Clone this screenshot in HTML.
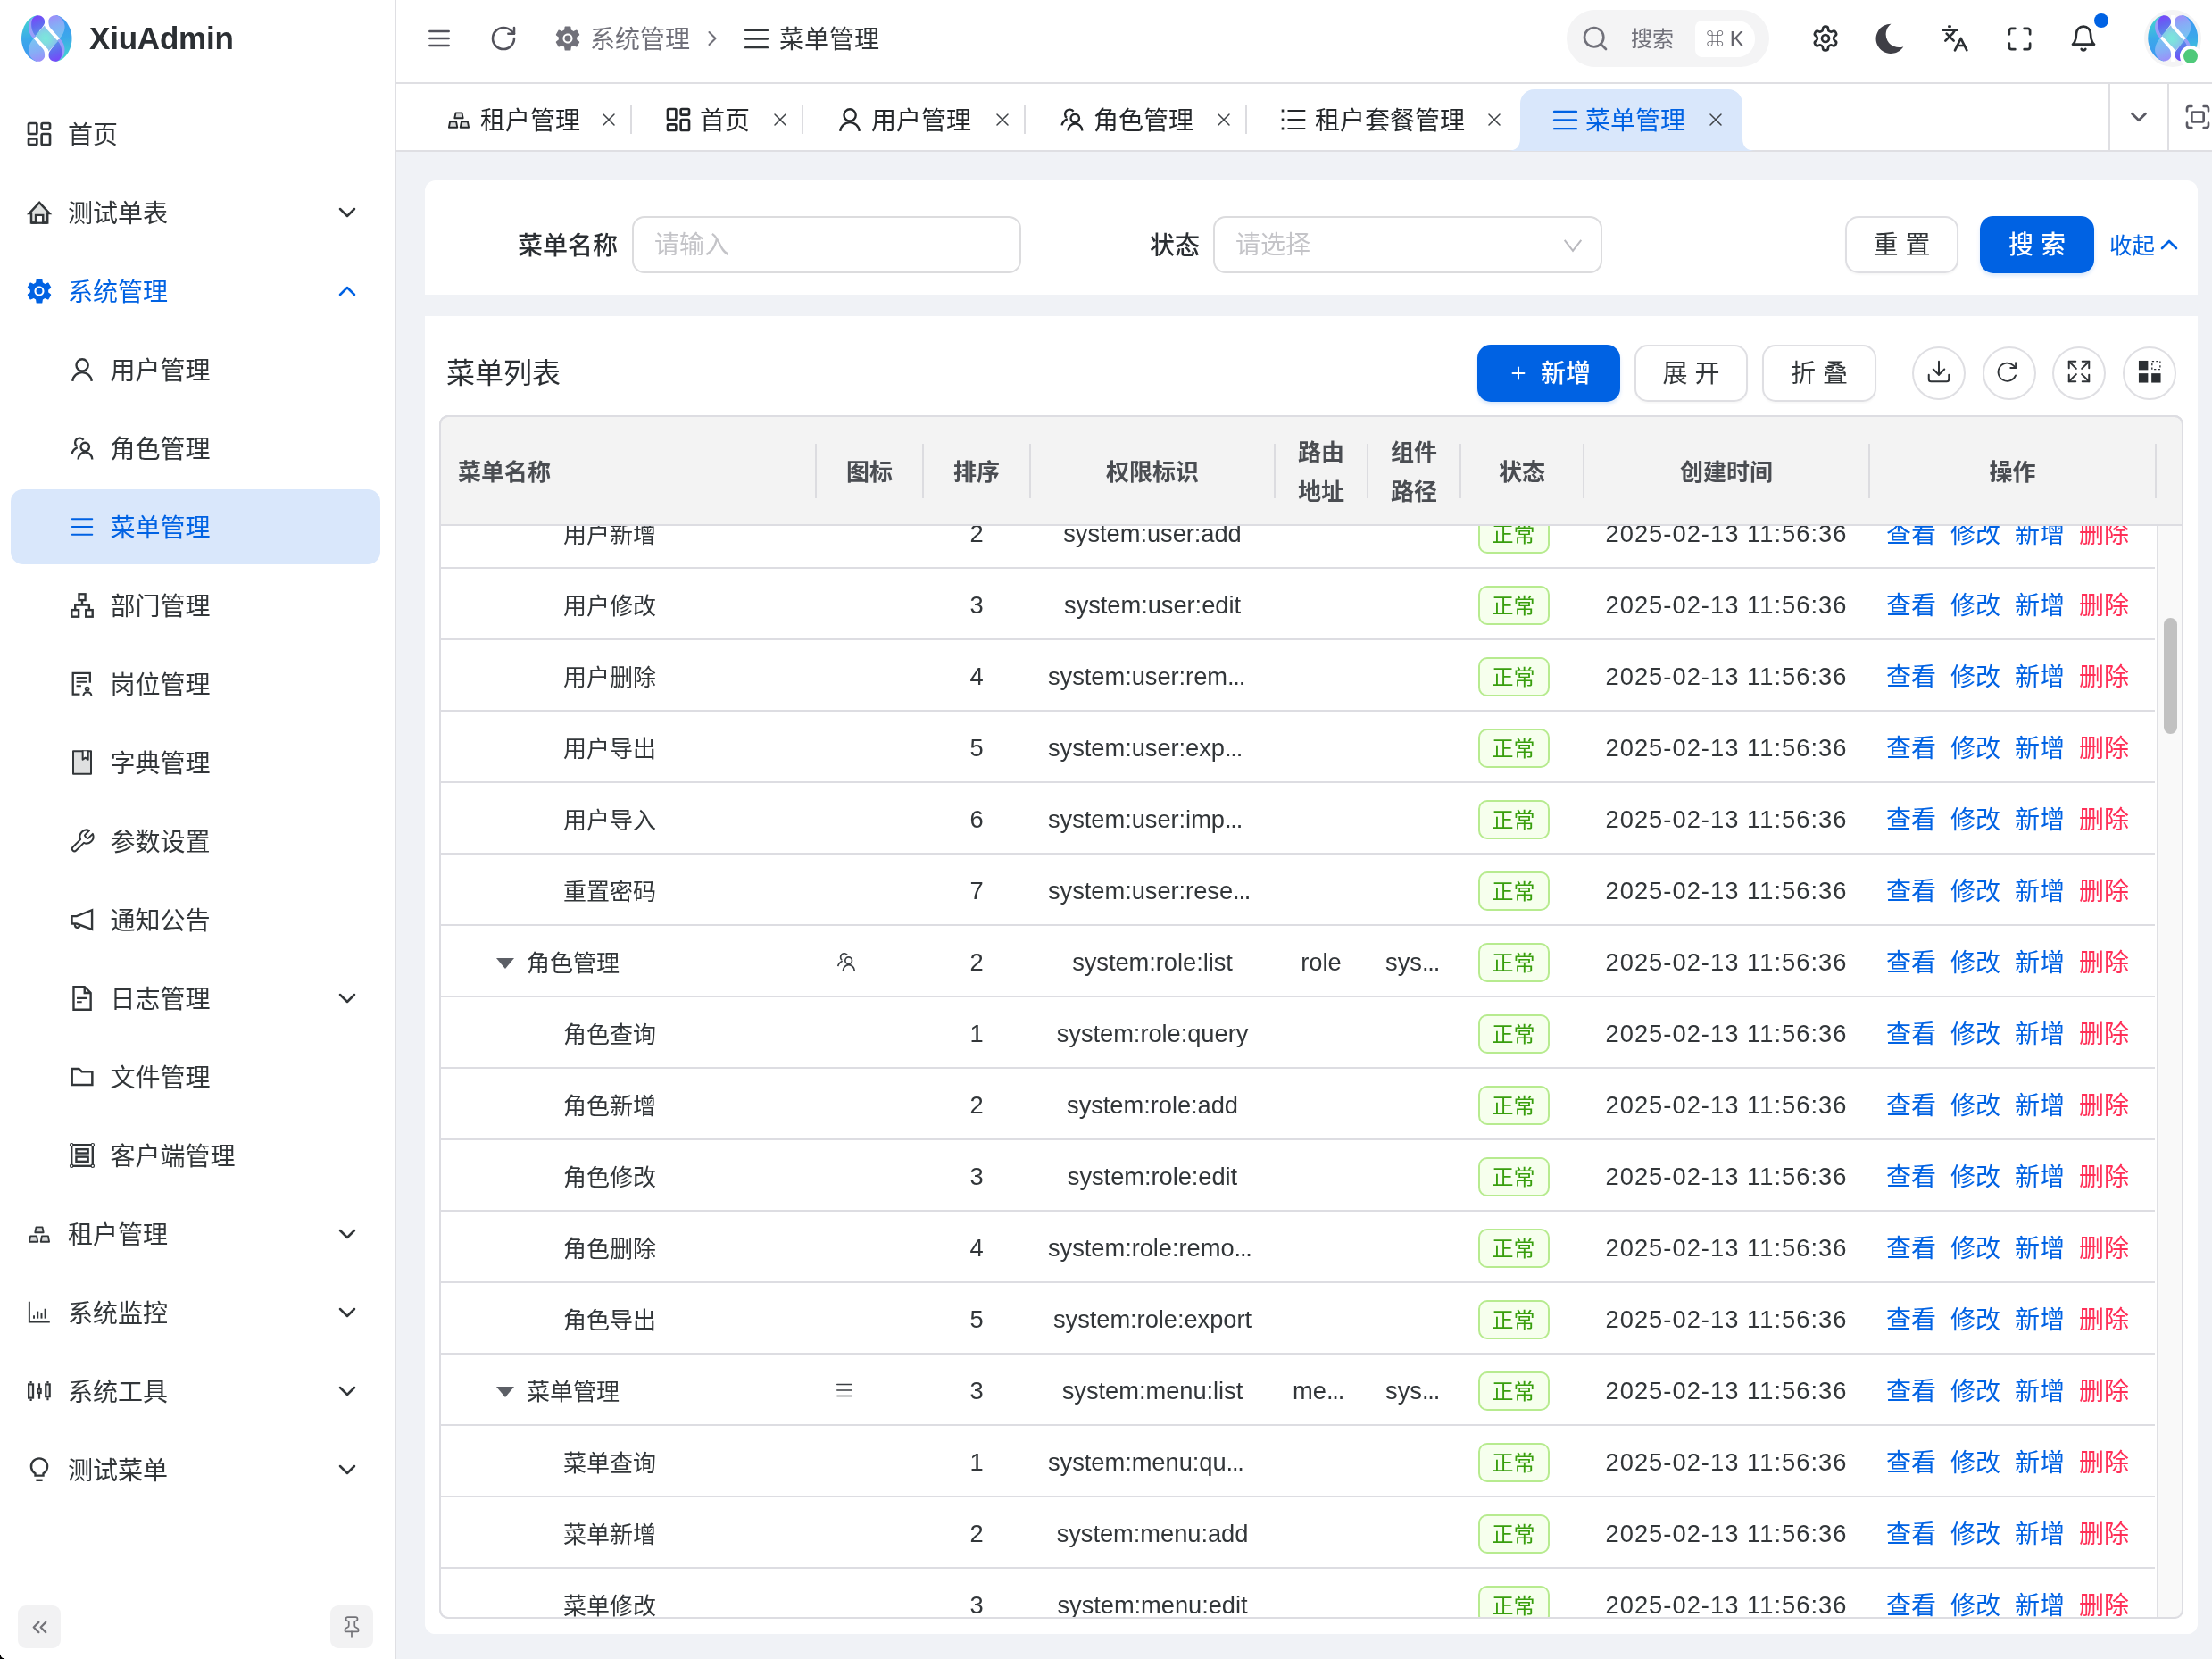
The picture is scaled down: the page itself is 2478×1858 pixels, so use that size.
<!DOCTYPE html>
<html lang="zh-CN"><head><meta charset="utf-8"><title>XiuAdmin - 菜单管理</title>
<style>
*{box-sizing:border-box}
html,body{margin:0;padding:0}
body{width:2478px;height:1858px;position:relative;overflow:hidden;background:#f0f2f6;
font-family:"Liberation Sans","Noto Sans CJK SC",sans-serif;color:#323639;font-size:28px;line-height:1}
#app{position:absolute;left:0;top:0;width:2478px;height:1858px;overflow:hidden;will-change:transform}
svg{overflow:visible}
a{text-decoration:none}
/* sidebar */
#side{position:absolute;left:0;top:0;width:444px;height:1858px;background:#fff;border-right:2px solid #dfdfe3}
#logo{position:absolute;left:24px;top:17px}
#brand{position:absolute;left:100px;top:20px;font-size:35px;line-height:46px;font-weight:700;color:#2b2f33;letter-spacing:-.2px}
.mi{position:absolute;left:12px;width:414px;height:84px;border-radius:14px}
.mi.act{background:#d9e7fb;color:#0062e3}
.mi.open{color:#0062e3}
.mic{position:absolute}
.mtx{position:absolute;top:2px;line-height:84px;font-size:28px;white-space:nowrap}
.mch{position:absolute;left:361px;top:26px}
.sbtn{position:absolute;top:1798px;width:48px;height:48px;border-radius:9px;background:#f2f2f3;color:#737378;display:flex;align-items:center;justify-content:center}
/* header */
#head{position:absolute;left:444px;top:0;width:2034px;height:94px;background:#fff;border-bottom:2px solid #dfdfe3}
.hi{position:absolute;color:#45494d}
.bc{position:absolute;top:2px;line-height:86px;font-size:28px;white-space:nowrap}
#srch{position:absolute;left:1755px;top:11px;width:227px;height:64px;border-radius:32px;background:#f4f4f5;color:#71717a}
#kbd{position:absolute;left:144px;top:12px;width:67px;height:41px;background:#fff;border-radius:8px 20px 20px 8px;font-size:24px;line-height:42px;text-align:center;color:#63636b}
/* tabs */
#tabs{position:absolute;left:444px;top:94px;width:2034px;height:76px;background:#fff;border-bottom:2px solid #dfdfe3}
.tab{position:absolute;top:94px;height:74px;color:#25282b}
.tic{position:absolute}
.ttx{position:absolute;left:77px;top:2px;line-height:80px;font-size:28px;white-space:nowrap}
.tx{position:absolute;right:13px;top:28px;color:#3f4347}
.tsep{position:absolute;right:-1px;top:24px;width:2px;height:32px;background:#dcdce0}
/* cards */
.card{position:absolute;left:476px;width:1986px;background:#fff}
.lbl{position:absolute;font-size:28px;font-weight:500;line-height:63px;top:244px;white-space:nowrap;color:#2b2f33}
.inp{position:absolute;top:242px;height:64px;border:2px solid #dcdcde;border-radius:14px;background:#fff;font-size:28px;line-height:62px;color:#c4c4c8;padding-left:23px}
.btn{position:absolute;height:64px;border-radius:15px;font-size:28px;line-height:62px;text-align:center;border:2px solid #dfdfe3;background:#fff;color:#323639;box-shadow:0 2px 2px rgba(0,0,0,.03);white-space:nowrap}
.btn.pri{background:#0062e3;border-color:#0062e3;color:#fff;box-shadow:0 3px 4px rgba(0,98,227,.15)}
.cbtn{position:absolute;top:388px;width:60px;height:60px;border-radius:30px;border:2px solid #dfdfe3;background:#fff;color:#2f3337;display:flex;align-items:center;justify-content:center;padding-bottom:4px}
/* table */
#tbl{position:absolute;left:492px;top:465px;width:1954px;height:1348px;border:2px solid #dddde2;border-radius:10px;overflow:hidden;background:#fff}
#thead{position:absolute;left:0;top:0;width:1955px;height:122px;background:#f3f3f4;border-bottom:2px solid #e3e3e6}
.th{position:absolute;top:0;height:120px;display:flex;align-items:center;justify-content:center;text-align:center;font-weight:700;font-size:26px;line-height:44px;color:#4a4d52;padding-top:3px}
.th i{position:absolute;right:-1px;top:30px;width:2px;height:61px;background:#dcdce0}
.tr{position:absolute;left:492px;width:1922px;height:80px;border-bottom:2px solid #dddde2;font-size:26px}
.td{position:absolute;top:0;height:78px;line-height:84px;white-space:nowrap;text-align:center;overflow:hidden}
.c-name{left:2px;width:420px;text-align:left}
.c-icon{left:422px;width:120px}
.c-sort{left:542px;width:120px;font-size:27.300px;line-height:82px}
.c-perm{left:662px;width:274px;font-size:27.300px;line-height:82px;letter-spacing:-.05px}
.c-route{left:936px;width:104px;font-size:27.300px;line-height:82px}
.c-comp{left:1040px;width:104px;font-size:27.300px;line-height:82px}
.c-stat{left:1144px;width:138px}
.c-time{left:1282px;width:320px;font-size:27.300px;line-height:82px;letter-spacing:1.03px}
.c-op{left:1602px;width:321px;text-align:left;font-size:28px}
.c-op a{position:relative;top:0px;display:inline-block;margin-right:16px;color:#0062e3}
.c-op a:first-child{margin-left:19px}
.c-op a.del{color:#ff3058;margin-right:0}
.nm{position:absolute;top:0}
.ell{text-align:left;padding-left:20px}
.dots{letter-spacing:-1.2px}
.tri{position:absolute;left:62px;top:36px;width:0;height:0;border-left:10px solid transparent;border-right:10px solid transparent;border-top:12px solid #5c5f66}
.ricon{position:absolute;left:21px;color:#3a3e42}
.tag{display:inline-block;vertical-align:top;margin-top:19px;margin-right:19px;width:80px;height:44px;line-height:41px;border:2px solid #b7eb8f;background:#f6ffed;color:#389e0d;font-size:24px;border-radius:10px;text-align:center}
</style></head><body>
<div id="app">
<!-- content cards -->
<div class="card" style="top:202px;height:128px;border-radius:12px 12px 0 0"></div>
<div class="card" style="top:354px;height:1476px;border-radius:0 0 12px 12px"></div>

<!-- search form -->
<span class="lbl" style="left:580px">菜单名称</span>
<div class="inp" style="left:708px;width:436px">请输入</div>
<span class="lbl" style="left:1288px">状态</span>
<div class="inp" style="left:1359px;width:436px">请选择<span style="position:absolute;left:385px;top:15px;color:#b9b9be"><svg width="32" height="32" viewBox="-16 -16 32 32" fill="none" stroke="currentColor" stroke-width="2" stroke-linecap="round" stroke-linejoin="round" style="display:block;"><path stroke-linecap="butt" stroke-linejoin="miter" d="M-9.300 -6.200L0 5.800L9.300 -6.200"/></svg></span></div>
<div class="btn" style="left:2067px;top:242px;width:127px">重 置</div>
<div class="btn pri" style="left:2218px;top:242px;width:128px;font-weight:500">搜 索</div>
<span style="position:absolute;left:2363px;top:244px;line-height:63px;font-size:25.500px;color:#0062e3;white-space:nowrap">收起</span>
<span style="position:absolute;left:2414px;top:258px;color:#0062e3"><svg width="32" height="32" viewBox="0 0 24 24" fill="none" stroke="currentColor" stroke-width="2" stroke-linecap="round" stroke-linejoin="round" style="display:block;"><path d="m18 15-6-6-6 6"/></svg></span>

<!-- toolbar -->
<span style="position:absolute;left:500px;top:386px;line-height:64px;font-size:32px;color:#2b2f33;white-space:nowrap">菜单列表</span>
<div class="btn pri" style="left:1655px;top:386px;width:160px;font-weight:500"><span style="position:absolute;left:33px;top:19px"><svg width="22" height="22" viewBox="0 0 24 24" fill="none" stroke="currentColor" stroke-width="2.2" stroke-linecap="round" stroke-linejoin="round" style="display:block;"><path d="M5 12h14"/><path d="M12 5v14"/></svg></span><span style="margin-left:38px">新增</span></div>
<div class="btn" style="left:1831px;top:386px;width:127px">展 开</div>
<div class="btn" style="left:1974px;top:386px;width:128px">折 叠</div>
<div class="cbtn" style="left:2142px"><svg width="30" height="30" viewBox="0 0 24 24" fill="none" stroke="currentColor" stroke-width="1.6" stroke-linecap="round" stroke-linejoin="round" style="display:block;"><path d="M21 15v4a2 2 0 0 1-2 2H5a2 2 0 0 1-2-2v-4"/><path d="m7 10 5 5 5-5"/><path d="M12 15V3"/></svg></div>
<div class="cbtn" style="left:2221px;padding-right:5px"><svg width="27" height="27" viewBox="0 0 24 24" fill="none" stroke="currentColor" stroke-width="1.6" stroke-linecap="round" stroke-linejoin="round" style="display:block;"><path d="M20.500 15.500a9 9 0 1 1-2.200-9.900L20.500 8"/><path d="M20.500 2.800V8h-5.200"/></svg></div>
<div class="cbtn" style="left:2299px"><svg width="30" height="30" viewBox="0 0 24 24" fill="none" stroke="currentColor" stroke-width="1.6" stroke-linecap="round" stroke-linejoin="round" style="display:block;"><path d="m15 3h6v6"/><path d="M21 3l-6.500 6.500"/><path d="M9 21H3v-6"/><path d="m3 21 6.500-6.500"/><path d="M3 9V3h6"/><path d="m3 3 6.500 6.500"/><path d="M21 15v6h-6"/><path d="m21 21-6.500-6.500"/></svg></div>
<div class="cbtn" style="left:2378px"><svg width="26.500" height="26.500" viewBox="0 0 28 28" style="display:block"><rect x="1" y="1" width="11" height="11" fill="#2b2f33"/><rect x="1" y="16" width="11" height="11" fill="#2b2f33"/><rect x="16" y="16" width="11" height="11" fill="#2b2f33"/><rect x="16.700" y="1.700" width="9.600" height="9.600" fill="none" stroke="#2b2f33" stroke-width="1.400" stroke-dasharray="2.400 2.400"/></svg></div>

<!-- table -->
<div id="tbl"></div>
<div class="tr" style="top:557px"><div class="td c-name"><span class="nm" style="left:137px">用户新增</span></div><div class="td c-icon"></div><div class="td c-sort">2</div><div class="td c-perm ">system:user:add</div><div class="td c-route "></div><div class="td c-comp ell"></div><div class="td c-stat"><span class="tag">正常</span></div><div class="td c-time">2025-02-13 11:56:36</div><div class="td c-op"><a>查看</a><a>修改</a><a>新增</a><a class="del">删除</a></div></div><div class="tr" style="top:637px"><div class="td c-name"><span class="nm" style="left:137px">用户修改</span></div><div class="td c-icon"></div><div class="td c-sort">3</div><div class="td c-perm ">system:user:edit</div><div class="td c-route "></div><div class="td c-comp ell"></div><div class="td c-stat"><span class="tag">正常</span></div><div class="td c-time">2025-02-13 11:56:36</div><div class="td c-op"><a>查看</a><a>修改</a><a>新增</a><a class="del">删除</a></div></div><div class="tr" style="top:717px"><div class="td c-name"><span class="nm" style="left:137px">用户删除</span></div><div class="td c-icon"></div><div class="td c-sort">4</div><div class="td c-perm ell">system:user:rem<span class="dots">...</span></div><div class="td c-route "></div><div class="td c-comp ell"></div><div class="td c-stat"><span class="tag">正常</span></div><div class="td c-time">2025-02-13 11:56:36</div><div class="td c-op"><a>查看</a><a>修改</a><a>新增</a><a class="del">删除</a></div></div><div class="tr" style="top:797px"><div class="td c-name"><span class="nm" style="left:137px">用户导出</span></div><div class="td c-icon"></div><div class="td c-sort">5</div><div class="td c-perm ell">system:user:exp<span class="dots">...</span></div><div class="td c-route "></div><div class="td c-comp ell"></div><div class="td c-stat"><span class="tag">正常</span></div><div class="td c-time">2025-02-13 11:56:36</div><div class="td c-op"><a>查看</a><a>修改</a><a>新增</a><a class="del">删除</a></div></div><div class="tr" style="top:877px"><div class="td c-name"><span class="nm" style="left:137px">用户导入</span></div><div class="td c-icon"></div><div class="td c-sort">6</div><div class="td c-perm ell">system:user:imp<span class="dots">...</span></div><div class="td c-route "></div><div class="td c-comp ell"></div><div class="td c-stat"><span class="tag">正常</span></div><div class="td c-time">2025-02-13 11:56:36</div><div class="td c-op"><a>查看</a><a>修改</a><a>新增</a><a class="del">删除</a></div></div><div class="tr" style="top:957px"><div class="td c-name"><span class="nm" style="left:137px">重置密码</span></div><div class="td c-icon"></div><div class="td c-sort">7</div><div class="td c-perm ell">system:user:rese<span class="dots">...</span></div><div class="td c-route "></div><div class="td c-comp ell"></div><div class="td c-stat"><span class="tag">正常</span></div><div class="td c-time">2025-02-13 11:56:36</div><div class="td c-op"><a>查看</a><a>修改</a><a>新增</a><a class="del">删除</a></div></div><div class="tr" style="top:1037px"><div class="td c-name"><span class="tri"></span><span class="nm" style="left:96px">角色管理</span></div><div class="td c-icon"><span class="ricon" style="top:27px"><svg width="26" height="26" viewBox="-16 -16 32 32" fill="none" stroke="currentColor" stroke-width="2.1" stroke-linecap="round" stroke-linejoin="round" style="display:block;"><g stroke-linecap="butt"><circle cx="3.250" cy="-1.500" r="4.700"/><path d="M-4.400 12.400A7.850 7.850 0 0 1 11.300 12.400"/><path d="M1.540 -9.220A5.200 5.200 0 1 0 -6.070 -2.240"/><path d="M-5.200 -0.900C-8.500 0.500 -10.800 3.200 -11.400 6.400"/></g></svg></span></div><div class="td c-sort">2</div><div class="td c-perm ">system:role:list</div><div class="td c-route ">role</div><div class="td c-comp ell">sys<span class="dots">...</span></div><div class="td c-stat"><span class="tag">正常</span></div><div class="td c-time">2025-02-13 11:56:36</div><div class="td c-op"><a>查看</a><a>修改</a><a>新增</a><a class="del">删除</a></div></div><div class="tr" style="top:1117px"><div class="td c-name"><span class="nm" style="left:137px">角色查询</span></div><div class="td c-icon"></div><div class="td c-sort">1</div><div class="td c-perm ">system:role:query</div><div class="td c-route "></div><div class="td c-comp ell"></div><div class="td c-stat"><span class="tag">正常</span></div><div class="td c-time">2025-02-13 11:56:36</div><div class="td c-op"><a>查看</a><a>修改</a><a>新增</a><a class="del">删除</a></div></div><div class="tr" style="top:1197px"><div class="td c-name"><span class="nm" style="left:137px">角色新增</span></div><div class="td c-icon"></div><div class="td c-sort">2</div><div class="td c-perm ">system:role:add</div><div class="td c-route "></div><div class="td c-comp ell"></div><div class="td c-stat"><span class="tag">正常</span></div><div class="td c-time">2025-02-13 11:56:36</div><div class="td c-op"><a>查看</a><a>修改</a><a>新增</a><a class="del">删除</a></div></div><div class="tr" style="top:1277px"><div class="td c-name"><span class="nm" style="left:137px">角色修改</span></div><div class="td c-icon"></div><div class="td c-sort">3</div><div class="td c-perm ">system:role:edit</div><div class="td c-route "></div><div class="td c-comp ell"></div><div class="td c-stat"><span class="tag">正常</span></div><div class="td c-time">2025-02-13 11:56:36</div><div class="td c-op"><a>查看</a><a>修改</a><a>新增</a><a class="del">删除</a></div></div><div class="tr" style="top:1357px"><div class="td c-name"><span class="nm" style="left:137px">角色删除</span></div><div class="td c-icon"></div><div class="td c-sort">4</div><div class="td c-perm ell">system:role:remo<span class="dots">...</span></div><div class="td c-route "></div><div class="td c-comp ell"></div><div class="td c-stat"><span class="tag">正常</span></div><div class="td c-time">2025-02-13 11:56:36</div><div class="td c-op"><a>查看</a><a>修改</a><a>新增</a><a class="del">删除</a></div></div><div class="tr" style="top:1437px"><div class="td c-name"><span class="nm" style="left:137px">角色导出</span></div><div class="td c-icon"></div><div class="td c-sort">5</div><div class="td c-perm ">system:role:export</div><div class="td c-route "></div><div class="td c-comp ell"></div><div class="td c-stat"><span class="tag">正常</span></div><div class="td c-time">2025-02-13 11:56:36</div><div class="td c-op"><a>查看</a><a>修改</a><a>新增</a><a class="del">删除</a></div></div><div class="tr" style="top:1517px"><div class="td c-name"><span class="tri"></span><span class="nm" style="left:96px">菜单管理</span></div><div class="td c-icon"><span class="ricon" style="top:29px"><svg width="22" height="22" viewBox="0 0 24 24" fill="none" stroke="currentColor" stroke-width="1.7" stroke-linecap="round" stroke-linejoin="round" style="display:block;"><line x1="3" x2="21" y1="5" y2="5"/><line x1="3" x2="21" y1="12" y2="12"/><line x1="3" x2="21" y1="19" y2="19"/></svg></span></div><div class="td c-sort">3</div><div class="td c-perm ">system:menu:list</div><div class="td c-route ell">me<span class="dots">...</span></div><div class="td c-comp ell">sys<span class="dots">...</span></div><div class="td c-stat"><span class="tag">正常</span></div><div class="td c-time">2025-02-13 11:56:36</div><div class="td c-op"><a>查看</a><a>修改</a><a>新增</a><a class="del">删除</a></div></div><div class="tr" style="top:1597px"><div class="td c-name"><span class="nm" style="left:137px">菜单查询</span></div><div class="td c-icon"></div><div class="td c-sort">1</div><div class="td c-perm ell">system:menu:qu<span class="dots">...</span></div><div class="td c-route "></div><div class="td c-comp ell"></div><div class="td c-stat"><span class="tag">正常</span></div><div class="td c-time">2025-02-13 11:56:36</div><div class="td c-op"><a>查看</a><a>修改</a><a>新增</a><a class="del">删除</a></div></div><div class="tr" style="top:1677px"><div class="td c-name"><span class="nm" style="left:137px">菜单新增</span></div><div class="td c-icon"></div><div class="td c-sort">2</div><div class="td c-perm ">system:menu:add</div><div class="td c-route "></div><div class="td c-comp ell"></div><div class="td c-stat"><span class="tag">正常</span></div><div class="td c-time">2025-02-13 11:56:36</div><div class="td c-op"><a>查看</a><a>修改</a><a>新增</a><a class="del">删除</a></div></div><div class="tr" style="top:1757px"><div class="td c-name"><span class="nm" style="left:137px">菜单修改</span></div><div class="td c-icon"></div><div class="td c-sort">3</div><div class="td c-perm ">system:menu:edit</div><div class="td c-route "></div><div class="td c-comp ell"></div><div class="td c-stat"><span class="tag">正常</span></div><div class="td c-time">2025-02-13 11:56:36</div><div class="td c-op"><a>查看</a><a>修改</a><a>新增</a><a class="del">删除</a></div></div>
<div style="position:absolute;left:492px;top:465px;width:1954px;height:124px;background:#f3f3f3;border:2px solid #dddde2;border-radius:10px 10px 0 0">
<div class="th" style="left:0;width:420px;justify-content:flex-start;padding-left:19px">菜单名称<i></i></div>
<div class="th" style="left:420px;width:120px">图标<i></i></div>
<div class="th" style="left:540px;width:120px">排序<i></i></div>
<div class="th" style="left:660px;width:274px">权限标识<i></i></div>
<div class="th" style="left:934px;width:104px">路由<br>地址<i></i></div>
<div class="th" style="left:1038px;width:104px">组件<br>路径<i></i></div>
<div class="th" style="left:1142px;width:138px">状态<i></i></div>
<div class="th" style="left:1280px;width:320px">创建时间<i></i></div>
<div class="th" style="left:1600px;width:321px">操作<i></i></div>
</div>
<!-- table frame & scrollbar -->
<div style="position:absolute;left:2416px;top:589px;width:28px;height:1222px;background:#f9f9f9;border-left:2px solid #e0e0e4"></div>
<div style="position:absolute;left:2424px;top:692px;width:15px;height:130px;border-radius:8px;background:#c1c1c1"></div>
<div style="position:absolute;left:492px;top:465px;width:1954px;height:1348px;border:2px solid #dddde2;border-radius:10px;pointer-events:none"></div>
<div style="position:absolute;left:476px;top:1813px;width:1986px;height:17px;background:#fff;border-radius:0 0 12px 12px"></div>
<div style="position:absolute;left:476px;top:1830px;width:1986px;height:28px;background:#f0f2f6"></div>

<!-- sidebar -->
<div id="side">
<div id="logo"><svg viewBox="200 175 1420 1305" width="56.5" height="52" style="display:block;overflow:hidden">
<defs>
<linearGradient id="la1" gradientUnits="userSpaceOnUse" x1="300" y1="300" x2="380" y2="1400"><stop offset="0" stop-color="#42d2d2"/><stop offset=".5" stop-color="#3ba8ea"/><stop offset="1" stop-color="#3c98f2"/></linearGradient>
<linearGradient id="lb1" gradientUnits="userSpaceOnUse" x1="560" y1="830" x2="760" y2="1460"><stop offset="0" stop-color="#78c4f2"/><stop offset=".55" stop-color="#86aef6"/><stop offset="1" stop-color="#9c8ff9"/></linearGradient>
<linearGradient id="lc1" gradientUnits="userSpaceOnUse" x1="560" y1="200" x2="760" y2="720"><stop offset="0" stop-color="#7a45fa"/><stop offset=".45" stop-color="#6366f1"/><stop offset="1" stop-color="#5a90e8"/></linearGradient>
<radialGradient id="ld1" gradientUnits="userSpaceOnUse" cx="880" cy="830" r="330"><stop offset="0" stop-color="#7ae8dc"/><stop offset=".45" stop-color="#80dcdf"/><stop offset="1" stop-color="#8bc0ee"/></radialGradient>
<path id="lh1" d="M660 180C400 200 200 500 200 830C200 1150 420 1450 650 1480L700 1300 700 400z" fill="url(#la1)"/>
<g id="lk1">
<path d="M545 825L845 1125C905 1190 880 1320 850 1360C800 1485 650 1505 560 1445C450 1380 390 1250 400 1130C410 1000 480 900 545 825z" fill="url(#lb1)"/>
<path d="M530 235C370 340 340 640 545 830L600 750C480 620 450 400 530 235z" fill="#9a9ef9"/>
<path d="M592 748C500 640 465 480 488 350C510 230 600 180 670 180C800 185 872 290 856 390C845 470 700 620 592 748z" fill="url(#lc1)"/>
</g>
</defs>
<use href="#lh1"/><use href="#lh1" transform="rotate(180 910 828)"/>
<path d="M585 750L858 455L1235 906L962 1201z" fill="url(#ld1)"/>
<use href="#lk1"/><use href="#lk1" transform="rotate(180 910 828)"/>
<path id="lw1" d="M536 824L612 770L948 1138C976 1196 963 1260 963 1330L963 1520L857 1520L857 1330C857 1250 850 1172 800 1117z" fill="#fff"/>
<use href="#lw1" transform="rotate(180 910 828)"/>
</svg></div>
<div id="brand">XiuAdmin</div>
<div class="mi" style="top:108px"><span class="mic" style="left:15.8px;top:26.0px"><svg width="32" height="32" viewBox="0 0 24 24" fill="none" stroke="currentColor" stroke-width="2" stroke-linecap="round" stroke-linejoin="round" style="display:block;"><rect width="7" height="9" x="3" y="3" rx="1"/><rect width="7" height="5" x="14" y="3" rx="1"/><rect width="7" height="9" x="14" y="12" rx="1"/><rect width="7" height="5" x="3" y="16" rx="1"/></svg></span><span class="mtx" style="left:64px">首页</span></div><div class="mi" style="top:196px"><span class="mic" style="left:15.8px;top:26.0px"><svg width="32" height="32" viewBox="-16 -16 32 32" fill="none" stroke="currentColor" stroke-width="2.5" stroke-linecap="round" stroke-linejoin="round" style="display:block;"><g stroke-linejoin="miter" stroke-linecap="butt"><path fill="#dfe1e0" d="M0.100 -11.200L-11.200 1.000H-9.000V11.600H-3.900V2.900H4.200V11.600H9.200V1.000H11.400z"/><path d="M-9.000 11.600H9.200"/><path fill="#fff" stroke="none" d="M-2.650 4.150H2.950V10.350H-2.650z"/></g></svg></span><span class="mtx" style="left:64px">测试单表</span><span class="mch"><svg width="32" height="32" viewBox="0 0 24 24" fill="none" stroke="currentColor" stroke-width="1.9" stroke-linecap="round" stroke-linejoin="round" style="display:block;"><path d="m6 9 6 6 6-6"/></svg></span></div><div class="mi open" style="top:284px"><span class="mic" style="left:14.8px;top:25.0px"><svg width="34" height="34" viewBox="0 0 24 24" fill="none" stroke="currentColor" stroke-width="0" stroke-linecap="round" stroke-linejoin="round" style="display:block"><path fill="currentColor" stroke="none" d="M19.14 12.94c.04-.3.06-.61.06-.94c0-.32-.02-.64-.07-.94l2.03-1.58a.49.49 0 0 0 .12-.61l-1.92-3.32a.488.488 0 0 0-.59-.22l-2.39.96c-.5-.38-1.03-.7-1.62-.94l-.36-2.54a.484.484 0 0 0-.48-.41h-3.84c-.24 0-.43.17-.47.41l-.36 2.54c-.59.24-1.13.57-1.62.94l-2.39-.96c-.22-.08-.47 0-.59.22L2.74 8.87c-.12.21-.08.47.12.61l2.03 1.58c-.05.3-.09.63-.09.94s.02.64.07.94l-2.03 1.58a.49.49 0 0 0-.12.61l1.92 3.32c.12.22.37.29.59.22l2.39-.96c.5.38 1.03.7 1.62.94l.36 2.54c.05.24.24.41.48.41h3.84c.24 0 .44-.17.47-.41l.36-2.54c.59-.24 1.13-.56 1.62-.94l2.39.96c.22.08.47 0 .59-.22l1.92-3.32c.12-.22.07-.47-.12-.61l-2.01-1.58zM12 15.9c-2.15 0-3.9-1.75-3.9-3.9s1.75-3.9 3.9-3.9s3.9 1.75 3.9 3.9s-1.75 3.9-3.9 3.9z"/><circle cx="12" cy="12" r="2.450" fill="currentColor" stroke="none"/></svg></span><span class="mtx" style="left:64px">系统管理</span><span class="mch"><svg width="32" height="32" viewBox="0 0 24 24" fill="none" stroke="currentColor" stroke-width="1.9" stroke-linecap="round" stroke-linejoin="round" style="display:block;"><path d="m18 15-6-6-6 6"/></svg></span></div><div class="mi" style="top:372px"><span class="mic" style="left:63.9px;top:26.0px"><svg width="32" height="32" viewBox="-16 -16 32 32" fill="none" stroke="currentColor" stroke-width="2.4" stroke-linecap="round" stroke-linejoin="round" style="display:block;"><g stroke-linecap="butt"><circle cx="0.100" cy="-5.100" r="6.600"/><path d="M-10.700 12.900A10.740 10.740 0 0 1 10.700 12.900"/></g></svg></span><span class="mtx" style="left:111.5px">用户管理</span></div><div class="mi" style="top:460px"><span class="mic" style="left:63.9px;top:26.0px"><svg width="32" height="32" viewBox="-16 -16 32 32" fill="none" stroke="currentColor" stroke-width="2.4" stroke-linecap="round" stroke-linejoin="round" style="display:block;"><g stroke-linecap="butt"><circle cx="3.250" cy="-1.500" r="4.700"/><path d="M-4.400 12.400A7.850 7.850 0 0 1 11.300 12.400"/><path d="M1.540 -9.220A5.200 5.200 0 1 0 -6.070 -2.240"/><path d="M-5.200 -0.900C-8.500 0.500 -10.800 3.200 -11.400 6.400"/></g></svg></span><span class="mtx" style="left:111.5px">角色管理</span></div><div class="mi act" style="top:548px"><span class="mic" style="left:64.9px;top:27.0px"><svg width="30" height="30" viewBox="0 0 24 24" fill="none" stroke="currentColor" stroke-width="1.6" stroke-linecap="round" stroke-linejoin="round" style="display:block;"><line x1="3" x2="21" y1="5" y2="5"/><line x1="3" x2="21" y1="12" y2="12"/><line x1="3" x2="21" y1="19" y2="19"/></svg></span><span class="mtx" style="left:111.5px">菜单管理</span></div><div class="mi" style="top:636px"><span class="mic" style="left:63.9px;top:26.0px"><svg width="32" height="32" viewBox="-16 -16 32 32" fill="none" stroke="currentColor" stroke-width="2.4" stroke-linecap="round" stroke-linejoin="round" style="display:block;"><g stroke-linejoin="miter" stroke-linecap="butt"><rect x="-3.500" y="-12.700" width="7.050" height="6.800"/><rect x="-11.700" y="5.150" width="7.750" height="7.550"/><rect x="4.240" y="5.150" width="7.460" height="7.550"/><path d="M0 -5.900V-0.400M-7.800 4.000V-0.400H7.850V4.000"/></g></svg></span><span class="mtx" style="left:111.5px">部门管理</span></div><div class="mi" style="top:724px"><span class="mic" style="left:63.9px;top:26.0px"><svg width="32" height="32" viewBox="-16 -16 32 32" fill="none" stroke="currentColor" stroke-width="2.3" stroke-linecap="round" stroke-linejoin="round" style="display:block;"><g stroke-linejoin="miter" stroke-linecap="butt"><path d="M-2.550 11.600H-10.270V-12.100H8.820V-1.200"/><path d="M-6.400 -7.000H5.640M-6.400 -2.360H5.640M-6.400 2.170H-1.100" stroke-width="2"/><circle cx="5.640" cy="5.540" r="1.900" stroke-width="1.900"/><path d="M1.300 13.300A4.600 4.600 0 0 1 10.450 13.300" stroke-width="2"/></g></svg></span><span class="mtx" style="left:111.5px">岗位管理</span></div><div class="mi" style="top:812px"><span class="mic" style="left:63.9px;top:26.0px"><svg width="32" height="32" viewBox="0 0 24 24" fill="none" stroke="currentColor" stroke-width="1.5" stroke-linecap="round" stroke-linejoin="round" style="display:block;"><path fill="#dfe0e0" d="M4.500 2.500h15v19h-15z"/><path d="M12.500 2.500v7l2.250-1.500 2.250 1.500v-7" fill="#fff"/></svg></span><span class="mtx" style="left:111.5px">字典管理</span></div><div class="mi" style="top:900px"><span class="mic" style="left:64.9px;top:27.0px"><svg width="30" height="30" viewBox="0 0 24 24" fill="none" stroke="currentColor" stroke-width="1.6" stroke-linecap="round" stroke-linejoin="round" style="display:block;"><path d="M14.700 6.300a1 1 0 0 0 0 1.400l1.600 1.600a1 1 0 0 0 1.400 0l3.770-3.770a6 6 0 0 1-7.940 7.940l-6.910 6.910a2.120 2.120 0 0 1-3-3l6.910-6.910a6 6 0 0 1 7.940-7.940l-3.760 3.760z"/></svg></span><span class="mtx" style="left:111.5px">参数设置</span></div><div class="mi" style="top:988px"><span class="mic" style="left:63.9px;top:26.0px"><svg width="32" height="32" viewBox="-16 -16 32 32" fill="none" stroke="currentColor" stroke-width="2.4" stroke-linecap="round" stroke-linejoin="round" style="display:block;"><g stroke-linejoin="miter" stroke-linecap="butt"><path d="M-11.500 -3.900H-6.050L11.070 -10.760V10.760L-6.050 4.500H-11.500z"/><path d="M-8.100 5.200C-8.300 9.500 -3.500 10.200 -2.600 6.300" stroke-width="2.200"/></g></svg></span><span class="mtx" style="left:111.5px">通知公告</span></div><div class="mi" style="top:1076px"><span class="mic" style="left:63.9px;top:26.0px"><svg width="32" height="32" viewBox="-16 -16 32 32" fill="none" stroke="currentColor" stroke-width="2.4" stroke-linecap="round" stroke-linejoin="round" style="display:block;"><g stroke-linejoin="miter" stroke-linecap="butt"><path d="M2.770 -12.760H-9.530V12.760H9.630V-6.000z"/><path d="M2.770 -12.760V-6.000H9.630"/><path d="M-5.940 -0.050H5.840M-5.940 4.250H-0.300" stroke-width="2.200"/></g></svg></span><span class="mtx" style="left:111.5px">日志管理</span><span class="mch"><svg width="32" height="32" viewBox="0 0 24 24" fill="none" stroke="currentColor" stroke-width="1.9" stroke-linecap="round" stroke-linejoin="round" style="display:block;"><path d="m6 9 6 6 6-6"/></svg></span></div><div class="mi" style="top:1164px"><span class="mic" style="left:63.9px;top:26.0px"><svg width="32" height="32" viewBox="-16 -16 32 32" fill="none" stroke="currentColor" stroke-width="2.5" stroke-linecap="round" stroke-linejoin="round" style="display:block;"><path stroke-linejoin="miter" stroke-linecap="butt" d="M-11.340 -9.110H-3.630L-0.380 -5.860H11.340V9.110H-11.340z"/></svg></span><span class="mtx" style="left:111.5px">文件管理</span></div><div class="mi" style="top:1252px"><span class="mic" style="left:63.9px;top:26.0px"><svg width="32" height="32" viewBox="-16 -16 32 32" fill="none" stroke="currentColor" stroke-width="2.4" stroke-linecap="round" stroke-linejoin="round" style="display:block;"><g stroke-linejoin="miter" stroke-linecap="butt"><rect x="-11.800" y="-11.800" width="23.600" height="23.600"/><rect x="-6.560" y="-6.840" width="13.200" height="4.340"/><rect x="-6.560" y="1.630" width="13.200" height="5.210"/><g fill="#fff" stroke-width="1.200"><circle cx="-11.800" cy="-11.800" r="1.700"/><circle cx="11.800" cy="-11.800" r="1.700"/><circle cx="-11.800" cy="11.800" r="1.700"/><circle cx="11.800" cy="11.800" r="1.700"/></g></g></svg></span><span class="mtx" style="left:111.5px">客户端管理</span></div><div class="mi" style="top:1340px"><span class="mic" style="left:17.8px;top:28.0px"><svg width="28" height="28" viewBox="0 0 24 24" fill="none" stroke="currentColor" stroke-width="1.6" stroke-linecap="round" stroke-linejoin="round" style="display:block;"><path fill="#d9dadb" d="M9 5.500h6l1 5H8z"/><path fill="#d9dadb" d="M3.500 14h6l1 5.500h-8z"/><path fill="#d9dadb" d="M14.500 14h6l1 5.500h-8z"/></svg></span><span class="mtx" style="left:64px">租户管理</span><span class="mch"><svg width="32" height="32" viewBox="0 0 24 24" fill="none" stroke="currentColor" stroke-width="1.9" stroke-linecap="round" stroke-linejoin="round" style="display:block;"><path d="m6 9 6 6 6-6"/></svg></span></div><div class="mi" style="top:1428px"><span class="mic" style="left:18.0px;top:28.2px"><svg width="27.5" height="27.5" viewBox="0 0 24 24" fill="none" stroke="currentColor" stroke-width="1.7" stroke-linecap="round" stroke-linejoin="round" style="display:block;"><g stroke-linecap="butt" stroke-linejoin="miter"><path d="M2.500 1.500v20h20"/><path d="M7 18v-3"/><path d="M10.700 18v-7"/><path d="M14.400 18v-5"/><path d="M18 18V8.500"/></g></svg></span><span class="mtx" style="left:64px">系统监控</span><span class="mch"><svg width="32" height="32" viewBox="0 0 24 24" fill="none" stroke="currentColor" stroke-width="1.9" stroke-linecap="round" stroke-linejoin="round" style="display:block;"><path d="m6 9 6 6 6-6"/></svg></span></div><div class="mi" style="top:1516px"><span class="mic" style="left:15.8px;top:26.0px"><svg width="32" height="32" viewBox="-16 -16 32 32" fill="none" stroke="currentColor" stroke-width="2.2" stroke-linecap="round" stroke-linejoin="round" style="display:block;"><g stroke-linejoin="miter" stroke-linecap="butt"><rect x="-11.900" y="-7.600" width="4.950" height="15.200" fill="#ebecec"/><path d="M-9.400 -11.100V-8.700M-9.400 8.700V11.100"/><rect x="-1.670" y="-2.500" width="3.340" height="4.500" fill="#ebecec"/><path d="M0 -8.700V-3.600M0 3.100V8.700"/><rect x="7.250" y="-7.600" width="4.450" height="13.700" fill="#ebecec"/><path d="M9.470 -11.100V-8.700M9.470 7.200V10.300"/></g></svg></span><span class="mtx" style="left:64px">系统工具</span><span class="mch"><svg width="32" height="32" viewBox="0 0 24 24" fill="none" stroke="currentColor" stroke-width="1.9" stroke-linecap="round" stroke-linejoin="round" style="display:block;"><path d="m6 9 6 6 6-6"/></svg></span></div><div class="mi" style="top:1604px"><span class="mic" style="left:15.8px;top:26.0px"><svg width="32" height="32" viewBox="-16 -16 32 32" fill="none" stroke="currentColor" stroke-width="2.4" stroke-linecap="round" stroke-linejoin="round" style="display:block;"><g stroke-linejoin="miter" stroke-linecap="butt"><path d="M-4.500 6.600V4.250A9.050 9.050 0 1 1 4.500 4.250V6.600z"/><path d="M-3.600 11.800H3.600"/></g></svg></span><span class="mtx" style="left:64px">测试菜单</span><span class="mch"><svg width="32" height="32" viewBox="0 0 24 24" fill="none" stroke="currentColor" stroke-width="1.9" stroke-linecap="round" stroke-linejoin="round" style="display:block;"><path d="m6 9 6 6 6-6"/></svg></span></div>
<div class="sbtn" style="left:20px"><svg width="27" height="27" viewBox="0 0 24 24" fill="none" stroke="currentColor" stroke-width="2" stroke-linecap="round" stroke-linejoin="round" style="display:block;"><path d="m11 17-5-5 5-5"/><path d="m18 17-5-5 5-5"/></svg></div>
<div class="sbtn" style="left:370px"><svg width="26" height="26" viewBox="0 0 24 24" fill="none" stroke="currentColor" stroke-width="1.6" stroke-linecap="round" stroke-linejoin="round" style="display:block;"><path d="M12 17v5"/><path d="M9 10.760a2 2 0 0 1-1.110 1.790l-1.780.900A2 2 0 0 0 5 15.240V16a1 1 0 0 0 1 1h12a1 1 0 0 0 1-1v-.760a2 2 0 0 0-1.110-1.790l-1.780-.900A2 2 0 0 1 15 10.760V7a1 1 0 0 1 1-1 2 2 0 0 0 0-4H8a2 2 0 0 0 0 4 1 1 0 0 1 1 1z"/></svg></div>
</div>

<!-- header -->
<div id="head"></div>
<span class="hi" style="left:476px;top:27px;color:#52525b"><svg width="32" height="32" viewBox="0 0 24 24" fill="none" stroke="currentColor" stroke-width="1.9" stroke-linecap="round" stroke-linejoin="round" style="display:block;"><line x1="4" x2="20" y1="6" y2="6"/><line x1="4" x2="20" y1="12" y2="12"/><line x1="4" x2="20" y1="18" y2="18"/></svg></span>
<span class="hi" style="left:548px;top:27px;color:#52525b"><svg width="32" height="32" viewBox="0 0 24 24" fill="none" stroke="currentColor" stroke-width="1.9" stroke-linecap="round" stroke-linejoin="round" style="display:block;"><path d="M21 12a9 9 0 1 1-9-9c2.520 0 4.930 1 6.740 2.740L21 8"/><path d="M21 3v5h-5"/></svg></span>
<span class="hi" style="left:619px;top:26px;color:#71717a"><svg width="34" height="34" viewBox="0 0 24 24" fill="none" stroke="currentColor" stroke-width="0" stroke-linecap="round" stroke-linejoin="round" style="display:block"><path fill="currentColor" stroke="none" d="M19.14 12.94c.04-.3.06-.61.06-.94c0-.32-.02-.64-.07-.94l2.03-1.58a.49.49 0 0 0 .12-.61l-1.92-3.32a.488.488 0 0 0-.59-.22l-2.39.96c-.5-.38-1.03-.7-1.62-.94l-.36-2.54a.484.484 0 0 0-.48-.41h-3.84c-.24 0-.43.17-.47.41l-.36 2.54c-.59.24-1.13.57-1.62.94l-2.39-.96c-.22-.08-.47 0-.59.22L2.74 8.87c-.12.21-.08.47.12.61l2.03 1.58c-.05.3-.09.63-.09.94s.02.64.07.94l-2.03 1.58a.49.49 0 0 0-.12.61l1.92 3.32c.12.22.37.29.59.22l2.39-.96c.5.38 1.03.7 1.62.94l.36 2.54c.05.24.24.41.48.41h3.84c.24 0 .44-.17.47-.41l.36-2.54c.59-.24 1.13-.56 1.62-.94l2.39.96c.22.08.47 0 .59-.22l1.92-3.32c.12-.22.07-.47-.12-.61l-2.01-1.58zM12 15.9c-2.15 0-3.9-1.75-3.9-3.9s1.75-3.9 3.9-3.9s3.9 1.75 3.9 3.9s-1.75 3.9-3.9 3.9z"/><circle cx="12" cy="12" r="2.450" fill="currentColor" stroke="none"/></svg></span>
<span class="bc" style="left:661px;color:#71717a">系统管理</span>
<span class="hi" style="left:784px;top:29px;color:#71717a"><svg width="28" height="28" viewBox="0 0 24 24" fill="none" stroke="currentColor" stroke-width="1.8" stroke-linecap="round" stroke-linejoin="round" style="display:block;"><path d="m9 18 6-6-6-6"/></svg></span>
<span class="hi" style="left:831px;top:27px;color:#323639"><svg width="33" height="33" viewBox="0 0 24 24" fill="none" stroke="currentColor" stroke-width="1.7" stroke-linecap="round" stroke-linejoin="round" style="display:block;"><line x1="3" x2="21" y1="5" y2="5"/><line x1="3" x2="21" y1="12" y2="12"/><line x1="3" x2="21" y1="19" y2="19"/></svg></span>
<span class="bc" style="left:873px;color:#323639">菜单管理</span>
<div id="srch"><span style="position:absolute;left:16px;top:16px"><svg width="32" height="32" viewBox="0 0 24 24" fill="none" stroke="currentColor" stroke-width="2" stroke-linecap="round" stroke-linejoin="round" style="display:block;"><circle cx="11" cy="11" r="8"/><path d="m21 21-4.300-4.300"/></svg></span><span style="position:absolute;left:72px;top:1px;line-height:64px;font-size:24px">搜索</span><div id="kbd"><span style="font-size:20px;font-weight:700;position:relative;top:-1px">⌘</span> K</div></div>
<span class="hi" style="left:2029px;top:27px;color:#2b2f33"><svg width="32" height="32" viewBox="0 0 24 24" fill="none" stroke="currentColor" stroke-width="2" stroke-linecap="round" stroke-linejoin="round" style="display:block;"><path d="M12.220 2h-.440a2 2 0 0 0-2 2v.180a2 2 0 0 1-1 1.730l-.430.250a2 2 0 0 1-2 0l-.150-.080a2 2 0 0 0-2.730.730l-.220.380a2 2 0 0 0 .730 2.730l.150.100a2 2 0 0 1 1 1.720v.510a2 2 0 0 1-1 1.740l-.150.090a2 2 0 0 0-.730 2.730l.220.380a2 2 0 0 0 2.730.730l.150-.080a2 2 0 0 1 2 0l.430.250a2 2 0 0 1 1 1.730V20a2 2 0 0 0 2 2h.440a2 2 0 0 0 2-2v-.180a2 2 0 0 1 1-1.730l.430-.250a2 2 0 0 1 2 0l.150.080a2 2 0 0 0 2.730-.730l.220-.390a2 2 0 0 0-.730-2.730l-.150-.080a2 2 0 0 1-1-1.740v-.500a2 2 0 0 1 1-1.740l.150-.090a2 2 0 0 0 .730-2.730l-.220-.380a2 2 0 0 0-2.730-.730l-.150.080a2 2 0 0 1-2 0l-.430-.250a2 2 0 0 1-1-1.730V4a2 2 0 0 0-2-2z"/><circle cx="12" cy="12" r="3"/></svg></span>
<span class="hi" style="left:2096px;top:23px;color:#3f3f46"><svg width="40" height="40" viewBox="0 0 24 24" fill="none" stroke="currentColor" stroke-width="0" stroke-linecap="round" stroke-linejoin="round" style="display:block;"><path fill="currentColor" stroke="none" d="M13.500 2.200a10 10 0 1 0 8.300 15.300A8.800 8.800 0 0 1 13.500 2.200z"/></svg></span>
<span class="hi" style="left:2173.700px;top:27px;color:#2b2f33"><svg width="32" height="32" viewBox="0 0 24 24" fill="none" stroke="currentColor" stroke-width="2" stroke-linecap="round" stroke-linejoin="round" style="display:block;"><path d="m5 8 6 6"/><path d="m4 14 6-6 2-3"/><path d="M2 5h12"/><path d="M7 2h1"/><path d="m22 22-5-10-5 10"/><path d="M14 18h6"/></svg></span>
<span class="hi" style="left:2246.500px;top:27.500px;color:#2b2f33"><svg width="31" height="31" viewBox="0 0 24 24" fill="none" stroke="currentColor" stroke-width="2.1" stroke-linecap="round" stroke-linejoin="round" style="display:block;"><path d="M8 3H5a2 2 0 0 0-2 2v3"/><path d="M21 8V5a2 2 0 0 0-2-2h-3"/><path d="M3 16v3a2 2 0 0 0 2 2h3"/><path d="M16 21h3a2 2 0 0 0 2-2v-3"/></svg></span>
<span class="hi" style="left:2318px;top:27px;color:#2b2f33"><svg width="32" height="32" viewBox="0 0 24 24" fill="none" stroke="currentColor" stroke-width="2" stroke-linecap="round" stroke-linejoin="round" style="display:block;"><path d="M6 8a6 6 0 0 1 12 0c0 7 3 9 3 9H3s3-2 3-9"/><path d="M10.300 21a1.940 1.940 0 0 0 3.400 0"/></svg></span>
<span style="position:absolute;left:2346px;top:15px;width:16px;height:16px;border-radius:8px;background:#0062e3"></span>
<div style="position:absolute;left:2402px;top:11px;width:64px;height:64px;border-radius:32px;background:#f4f4f5"></div>
<div style="position:absolute;left:2405.800px;top:17.300px"><svg viewBox="200 175 1420 1305" width="56.5" height="51.5" style="display:block;overflow:hidden">
<defs>
<linearGradient id="la2" gradientUnits="userSpaceOnUse" x1="300" y1="300" x2="380" y2="1400"><stop offset="0" stop-color="#42d2d2"/><stop offset=".5" stop-color="#3ba8ea"/><stop offset="1" stop-color="#3c98f2"/></linearGradient>
<linearGradient id="lb2" gradientUnits="userSpaceOnUse" x1="560" y1="830" x2="760" y2="1460"><stop offset="0" stop-color="#78c4f2"/><stop offset=".55" stop-color="#86aef6"/><stop offset="1" stop-color="#9c8ff9"/></linearGradient>
<linearGradient id="lc2" gradientUnits="userSpaceOnUse" x1="560" y1="200" x2="760" y2="720"><stop offset="0" stop-color="#7a45fa"/><stop offset=".45" stop-color="#6366f1"/><stop offset="1" stop-color="#5a90e8"/></linearGradient>
<radialGradient id="ld2" gradientUnits="userSpaceOnUse" cx="880" cy="830" r="330"><stop offset="0" stop-color="#7ae8dc"/><stop offset=".45" stop-color="#80dcdf"/><stop offset="1" stop-color="#8bc0ee"/></radialGradient>
<path id="lh2" d="M660 180C400 200 200 500 200 830C200 1150 420 1450 650 1480L700 1300 700 400z" fill="url(#la2)"/>
<g id="lk2">
<path d="M545 825L845 1125C905 1190 880 1320 850 1360C800 1485 650 1505 560 1445C450 1380 390 1250 400 1130C410 1000 480 900 545 825z" fill="url(#lb2)"/>
<path d="M530 235C370 340 340 640 545 830L600 750C480 620 450 400 530 235z" fill="#9a9ef9"/>
<path d="M592 748C500 640 465 480 488 350C510 230 600 180 670 180C800 185 872 290 856 390C845 470 700 620 592 748z" fill="url(#lc2)"/>
</g>
</defs>
<use href="#lh2"/><use href="#lh2" transform="rotate(180 910 828)"/>
<path d="M585 750L858 455L1235 906L962 1201z" fill="url(#ld2)"/>
<use href="#lk2"/><use href="#lk2" transform="rotate(180 910 828)"/>
<path id="lw2" d="M536 824L612 770L948 1138C976 1196 963 1260 963 1330L963 1520L857 1520L857 1330C857 1250 850 1172 800 1117z" fill="#fff"/>
<use href="#lw2" transform="rotate(180 910 828)"/>
</svg></div>
<span style="position:absolute;left:2442px;top:51px;width:24px;height:24px;border-radius:12px;background:#4fc97a;border:4px solid #fff"></span>

<!-- tabs -->
<div id="tabs"></div>
<div class="tab" style="left:461px;width:246px"><span class="tic" style="left:38.5px;top:26.2px"><svg width="28" height="28" viewBox="0 0 24 24" fill="none" stroke="currentColor" stroke-width="1.6" stroke-linecap="round" stroke-linejoin="round" style="display:block;"><path fill="#d9dadb" d="M9 5.500h6l1 5H8z"/><path fill="#d9dadb" d="M3.500 14h6l1 5.500h-8z"/><path fill="#d9dadb" d="M14.500 14h6l1 5.500h-8z"/></svg></span><span class="ttx">租户管理</span><span class="tx"><svg width="24" height="24" viewBox="0 0 24 24" fill="none" stroke="currentColor" stroke-width="1.5" stroke-linecap="round" stroke-linejoin="round" style="display:block;"><path d="M18 6 6 18"/><path d="m6 6 12 12"/></svg></span><i class="tsep"></i></div><div class="tab" style="left:707px;width:192px"><span class="tic" style="left:36.5px;top:24.2px"><svg width="32" height="32" viewBox="0 0 24 24" fill="none" stroke="currentColor" stroke-width="2" stroke-linecap="round" stroke-linejoin="round" style="display:block;"><rect width="7" height="9" x="3" y="3" rx="1"/><rect width="7" height="5" x="14" y="3" rx="1"/><rect width="7" height="9" x="14" y="12" rx="1"/><rect width="7" height="5" x="3" y="16" rx="1"/></svg></span><span class="ttx">首页</span><span class="tx"><svg width="24" height="24" viewBox="0 0 24 24" fill="none" stroke="currentColor" stroke-width="1.5" stroke-linecap="round" stroke-linejoin="round" style="display:block;"><path d="M18 6 6 18"/><path d="m6 6 12 12"/></svg></span><i class="tsep"></i></div><div class="tab" style="left:899px;width:249px"><span class="tic" style="left:36.5px;top:24.2px"><svg width="32" height="32" viewBox="-16 -16 32 32" fill="none" stroke="currentColor" stroke-width="2.4" stroke-linecap="round" stroke-linejoin="round" style="display:block;"><g stroke-linecap="butt"><circle cx="0.100" cy="-5.100" r="6.600"/><path d="M-10.700 12.900A10.740 10.740 0 0 1 10.700 12.900"/></g></svg></span><span class="ttx">用户管理</span><span class="tx"><svg width="24" height="24" viewBox="0 0 24 24" fill="none" stroke="currentColor" stroke-width="1.5" stroke-linecap="round" stroke-linejoin="round" style="display:block;"><path d="M18 6 6 18"/><path d="m6 6 12 12"/></svg></span><i class="tsep"></i></div><div class="tab" style="left:1148px;width:248px"><span class="tic" style="left:36.5px;top:24.2px"><svg width="32" height="32" viewBox="-16 -16 32 32" fill="none" stroke="currentColor" stroke-width="2.4" stroke-linecap="round" stroke-linejoin="round" style="display:block;"><g stroke-linecap="butt"><circle cx="3.250" cy="-1.500" r="4.700"/><path d="M-4.400 12.400A7.850 7.850 0 0 1 11.300 12.400"/><path d="M1.540 -9.220A5.200 5.200 0 1 0 -6.070 -2.240"/><path d="M-5.200 -0.900C-8.500 0.500 -10.800 3.200 -11.400 6.400"/></g></svg></span><span class="ttx">角色管理</span><span class="tx"><svg width="24" height="24" viewBox="0 0 24 24" fill="none" stroke="currentColor" stroke-width="1.5" stroke-linecap="round" stroke-linejoin="round" style="display:block;"><path d="M18 6 6 18"/><path d="m6 6 12 12"/></svg></span><i class="tsep"></i></div><div class="tab" style="left:1396px;width:303px"><span class="tic" style="left:36.5px;top:24.2px"><svg width="32" height="32" viewBox="-16 -16 32 32" fill="none" stroke="currentColor" stroke-width="2.2" stroke-linecap="round" stroke-linejoin="round" style="display:block;"><g stroke-linecap="butt"><path d="M-6.500 -10H13.300M-6.500 0H13.300M-6.500 10H13.300"/><path d="M-13.300 -10h2.600M-13.300 0h2.600M-13.300 10h2.600" stroke-width="2.800"/></g></svg></span><span class="ttx">租户套餐管理</span><span class="tx"><svg width="24" height="24" viewBox="0 0 24 24" fill="none" stroke="currentColor" stroke-width="1.5" stroke-linecap="round" stroke-linejoin="round" style="display:block;"><path d="M18 6 6 18"/><path d="m6 6 12 12"/></svg></span></div>
<svg style="position:absolute;left:1689px;top:100px;display:block" width="278" height="69" viewBox="0 0 278 69"><path fill="#d9e7fb" d="M0 69C9 69 14 64 14 55V16C14 7 21 0 30 0H247C256 0 263 7 263 16V55C263 64 268 69 278 69z"/></svg>
<span class="hi" style="left:1737px;top:118px;color:#0062e3"><svg width="33" height="33" viewBox="0 0 24 24" fill="none" stroke="currentColor" stroke-width="1.8" stroke-linecap="round" stroke-linejoin="round" style="display:block;"><line x1="3" x2="21" y1="5" y2="5"/><line x1="3" x2="21" y1="12" y2="12"/><line x1="3" x2="21" y1="19" y2="19"/></svg></span>
<span style="position:absolute;left:1776px;top:96px;line-height:80px;font-size:28px;color:#0062e3;white-space:nowrap">菜单管理</span>
<span class="hi" style="left:1910px;top:122px;color:#3f4347"><svg width="24" height="24" viewBox="0 0 24 24" fill="none" stroke="currentColor" stroke-width="1.5" stroke-linecap="round" stroke-linejoin="round" style="display:block;"><path d="M18 6 6 18"/><path d="m6 6 12 12"/></svg></span>
<div style="position:absolute;left:2362px;top:94px;width:2px;height:74px;background:#dfdfe3"></div>
<div style="position:absolute;left:2428px;top:94px;width:2px;height:74px;background:#dfdfe3"></div>
<span class="hi" style="left:2381px;top:116px;color:#5a5a64"><svg width="30" height="30" viewBox="0 0 24 24" fill="none" stroke="currentColor" stroke-width="2.2" stroke-linecap="round" stroke-linejoin="round" style="display:block;"><path d="m6 9 6 6 6-6"/></svg></span>
<span class="hi" style="left:2446px;top:115px;color:#5a5a64"><svg width="32" height="32" viewBox="0 0 24 24" fill="none" stroke="currentColor" stroke-width="2" stroke-linecap="round" stroke-linejoin="round" style="display:block;"><path d="M3 7V5a2 2 0 0 1 2-2h2"/><path d="M17 3h2a2 2 0 0 1 2 2v2"/><path d="M21 17v2a2 2 0 0 1-2 2h-2"/><path d="M7 21H5a2 2 0 0 1-2-2v-2"/><rect width="10" height="8" x="7" y="8" rx="1"/></svg></span>
<div style="position:absolute;left:0;top:1852px;width:6px;height:6px;background:radial-gradient(circle at 6px 0,transparent 5.500px,#000 6px)"></div>
</div>
</body></html>
